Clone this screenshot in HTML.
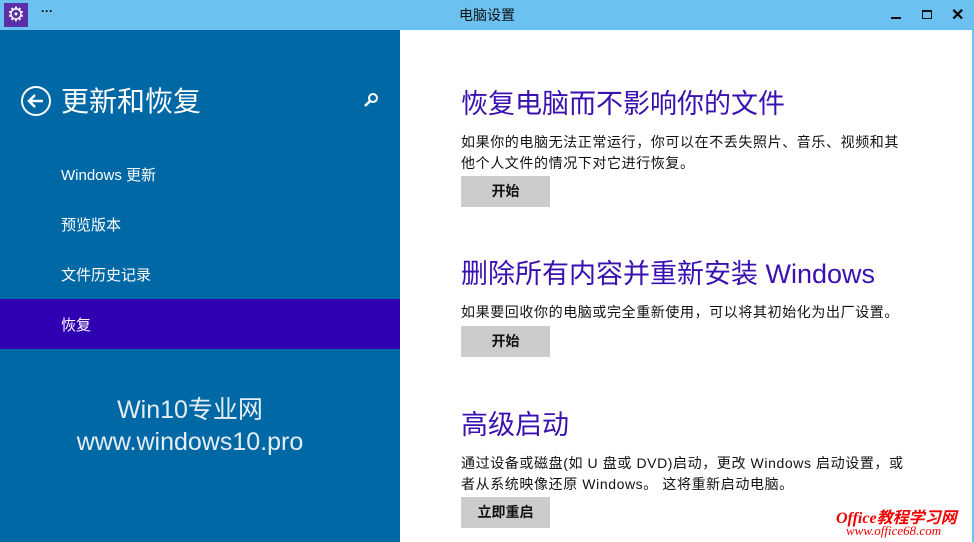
<!DOCTYPE html>
<html><head><meta charset="utf-8"><style>
body{margin:0;width:974px;height:542px;overflow:hidden;position:relative;font-family:"Liberation Sans","Noto Sans CJK SC",sans-serif;background:#fff}
.tb{position:absolute;left:0;top:0;width:974px;height:30px;background:#6bc2f1}
.ic{position:absolute;left:4px;top:3px;width:24px;height:24px;background:#5a2fa8;color:#fff;font-size:20px;line-height:24px;text-align:center}
.left{position:absolute;left:0;top:30px;width:400px;height:512px;background:#0068a4;color:#fff}
.item{position:absolute;left:61px;font-size:15px}
.sel{position:absolute;left:0;top:269px;width:400px;height:50px;background:#3000b3}
h2{position:absolute;left:461px;margin:0;font-weight:normal;font-size:27px;color:#3a10b0;white-space:nowrap}
p{position:absolute;left:461px;margin:0;font-size:14px;line-height:21px;color:#111;white-space:nowrap;letter-spacing:0.6px}
.btn{position:absolute;left:461px;width:89px;height:31px;background:#ccc;font-size:14px;font-weight:bold;text-align:center;line-height:31px;color:#111}
</style></head><body>
<div class="tb"><div class="ic">⚙</div><div style="position:absolute;left:41px;top:4px;font-size:12px;font-weight:bold">···</div>
<div style="position:absolute;left:0;width:974px;top:5px;text-align:center;font-size:14px;color:#111">电脑设置</div>
<div style="position:absolute;left:891px;top:17px;width:10px;height:2px;background:#111"></div>
<div style="position:absolute;left:922px;top:10px;width:8px;height:6px;border:1px solid #111;border-top-width:2px"></div>
<div style="position:absolute;left:951px;top:5px;font-size:16px;font-weight:bold">✕</div></div>
<div style="position:absolute;right:0;top:30px;width:2px;height:512px;background:#6bc2f1"></div>
<div class="left">
<svg style="position:absolute;left:20px;top:55px" width="32" height="32"><circle cx="16" cy="16" r="14" fill="none" stroke="#fff" stroke-width="2"/><path d="M23 16H10M15 10l-6 6 6 6" fill="none" stroke="#fff" stroke-width="2.5"/></svg>
<div style="position:absolute;left:61px;top:50px;font-size:28px">更新和恢复</div>
<svg style="position:absolute;left:363px;top:62px" width="16" height="16"><circle cx="10" cy="6" r="4" fill="none" stroke="#fff" stroke-width="2"/><path d="M7 9L2 14" stroke="#fff" stroke-width="2.5"/></svg>
<div class="item" style="top:134px">Windows 更新</div>
<div class="item" style="top:184px">预览版本</div>
<div class="item" style="top:234px">文件历史记录</div>
<div class="sel"></div>
<div class="item" style="top:284px">恢复</div>
<div style="position:absolute;left:0;width:380px;top:364px;text-align:center;font-size:25px;line-height:32px;color:#e6eef5">Win10专业网<br>www.windows10.pro</div>
</div>
<h2 style="top:82px">恢复电脑而不影响你的文件</h2>
<p style="top:132px">如果你的电脑无法正常运行，你可以在不丢失照片、音乐、视频和其<br>他个人文件的情况下对它进行恢复。</p>
<div class="btn" style="top:176px">开始</div>
<h2 style="top:252px">删除所有内容并重新安装 Windows</h2>
<p style="top:302px">如果要回收你的电脑或完全重新使用，可以将其初始化为出厂设置。</p>
<div class="btn" style="top:326px">开始</div>
<h2 style="top:403px">高级启动</h2>
<p style="top:453px">通过设备或磁盘(如 U 盘或 DVD)启动，更改 Windows 启动设置，或<br>者从系统映像还原 Windows。 这将重新启动电脑。</p>
<div class="btn" style="top:497px">立即重启</div>
<div style="position:absolute;left:836px;top:504px;color:#e00;font-style:italic;font-weight:bold;font-family:'Liberation Serif','Noto Sans CJK SC',serif;font-size:16px">Office教程学习网</div>
<div style="position:absolute;left:846px;top:523px;color:#e00;font-style:italic;font-family:'Liberation Serif',serif;font-size:13px">www.office68.com</div>
</body></html>
